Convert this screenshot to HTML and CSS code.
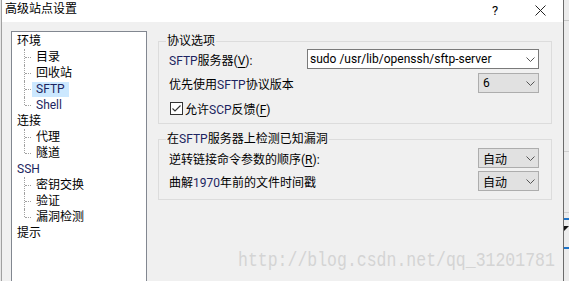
FILE: index.html
```html
<!DOCTYPE html>
<html lang="zh-CN">
<head>
    <meta charset="UTF-8">
    <title>高级站点设置</title>
    <link rel="stylesheet" href="styles.css">
</head>
<body>
    <div class="screen">
        <div class="dialog">
            <div class="titlebar">
                <span class="title">高级站点设置</span>
                <span class="help">?</span>
                <svg class="close" width="11" height="11" viewBox="0 0 11 11">
                    <path d="M0.5 0.5 L10.5 10.5 M10.5 0.5 L0.5 10.5" stroke="#222" stroke-width="1"/>
                </svg>
            </div>

            <div class="content">
                <div class="tree">
                    <div class="node">环境</div>
                    <div class="kids">
                        <div class="leaf"><span>目录</span></div>
                        <div class="leaf"><span>回收站</span></div>
                        <div class="leaf"><span class="lat selected">SFTP</span></div>
                        <div class="leaf"><span class="lat">Shell</span></div>
                    </div>
                    <div class="node">连接</div>
                    <div class="kids">
                        <div class="leaf"><span>代理</span></div>
                        <div class="leaf"><span>隧道</span></div>
                    </div>
                    <div class="node lat">SSH</div>
                    <div class="kids">
                        <div class="leaf"><span>密钥交换</span></div>
                        <div class="leaf"><span>验证</span></div>
                        <div class="leaf"><span>漏洞检测</span></div>
                    </div>
                    <div class="node">提示</div>
                </div>

                <div class="panel">
                    <fieldset class="group first">
                        <legend>协议选项</legend>
                        <div class="row">
                            <span class="label"><span class="lat">SFTP</span>服务器(<u>V</u>):</span>
                            <div class="combo edit wide">
                                <span class="value">sudo /usr/lib/openssh/sftp-server</span>
                                <svg class="chev" width="9" height="5" viewBox="0 0 9 5"><polyline points="0.5,0.5 4.5,4.5 8.5,0.5" fill="none" stroke="#555"/></svg>
                            </div>
                        </div>
                        <div class="row">
                            <span class="label">优先使用<span class="lat">SFTP</span>协议版本</span>
                            <div class="combo small">
                                <span class="value">6</span>
                                <svg class="chev" width="9" height="5" viewBox="0 0 9 5"><polyline points="0.5,0.5 4.5,4.5 8.5,0.5" fill="none" stroke="#555"/></svg>
                            </div>
                        </div>
                        <div class="check-row">
                            <svg width="13" height="13" viewBox="0 0 13 13">
                                <rect x="0.5" y="0.5" width="12" height="12" fill="#fff" stroke="#333"/>
                                <path d="M2.5 6.5 L5 9 L10.5 3.5" fill="none" stroke="#333" stroke-width="1.1"/>
                            </svg>
                            <span class="label">允许<span class="lat">SCP</span>反馈(<u>F</u>)</span>
                        </div>
                    </fieldset>

                    <fieldset class="group second">
                        <legend>在<span class="lat">SFTP</span>服务器上检测已知漏洞</legend>
                        <div class="row">
                            <span class="label">逆转链接命令参数的顺序(<u>R</u>):</span>
                            <div class="combo small">
                                <span class="value">自动</span>
                                <svg class="chev" width="9" height="5" viewBox="0 0 9 5"><polyline points="0.5,0.5 4.5,4.5 8.5,0.5" fill="none" stroke="#555"/></svg>
                            </div>
                        </div>
                        <div class="row">
                            <span class="label">曲解<span class="lat">1970</span>年前的文件时间戳</span>
                            <div class="combo small">
                                <span class="value">自动</span>
                                <svg class="chev" width="9" height="5" viewBox="0 0 9 5"><polyline points="0.5,0.5 4.5,4.5 8.5,0.5" fill="none" stroke="#555"/></svg>
                            </div>
                        </div>
                    </fieldset>
                </div>
            </div>
        </div>

        <div class="strip">
            <div class="strip-x"></div>
            <div class="strip-line"></div>
            <div class="strip-blue"></div>
            <div class="strip-arrow"></div>
            <div class="strip-blue"></div>
        </div>

        <div class="watermark">http://blog.csdn.net/qq_31201781</div>
    </div>
</body>
</html>
```

FILE: styles.css
```css
body {
    margin: 0;
    background-color: #e6e6e6;
    font-family: Roboto, "Noto Sans CJK SC", sans-serif;
    font-size: 12px;
    color: #000;
}

.screen {
    position: relative;
    display: flex;
    width: 569px;
    height: 281px;
    overflow: hidden;
    padding-left: 1px;
    box-sizing: border-box;
}

.dialog {
    width: 562px;
    height: 281px;
    flex: none;
    box-sizing: border-box;
    border-left: 1px solid #a0a0a0;
    background-color: #f0f0f0;
}

.titlebar {
    height: 22px;
    display: flex;
    align-items: center;
    padding-left: 3px;
    background-color: #fff;
}

.title {
    flex: 1;
    line-height: 16px;
    margin-top: -4px;
}

.help {
    font-size: 13px;
    width: 10px;
    margin-right: 33px;
    margin-top: -2px;
}

.close {
    margin-right: 17px;
    margin-top: -2px;
}

.content {
    display: flex;
    padding: 9px 0 0 9px;
}

.tree {
    width: 136px;
    height: 260px;
    box-sizing: border-box;
    border: 1px solid #828790;
    background-color: #fff;
    padding-top: 1px;
}

.node {
    height: 16px;
    line-height: 16px;
    padding-left: 5px;
}

.leaf {
    position: relative;
    height: 16px;
    line-height: 16px;
    padding-left: 20px;
}

.leaf::before {
    content: "";
    position: absolute;
    left: 12px;
    top: 0;
    height: 100%;
    border-left: 1px dotted #a0a0a0;
}

.leaf:last-child::before {
    height: 8px;
}

.leaf::after {
    content: "";
    position: absolute;
    left: 13px;
    top: 8px;
    width: 6px;
    border-top: 1px dotted #a0a0a0;
}

.leaf span {
    display: inline-block;
    padding: 0 4px;
    height: 15px;
    line-height: 15px;
    margin-top: 1px;
    vertical-align: top;
}

.leaf span.selected {
    background-color: #cce8ff;
}

.lat {
    color: #1c2560;
}

.panel {
    width: 394px;
    margin-left: 11px;
    margin-top: 2px;
}

.group {
    margin: 0;
    min-width: 0;
    border: 1px solid #dcdcdc;
    padding: 0 12px 7px 7px;
}

.group legend {
    padding: 0 1px;
    line-height: 16px;
    height: 16px;
}

.group.second {
    margin-top: 7px;
    padding-bottom: 8px;
}

.row {
    display: flex;
    align-items: center;
    justify-content: space-between;
    height: 20px;
    padding-left: 3px;
}

.first .row {
    margin-bottom: 4px;
}

.second .row:first-of-type {
    margin-top: 1px;
    margin-bottom: 3px;
}

.label u {
    text-decoration-thickness: 1px;
    text-underline-offset: 2px;
}

.combo {
    display: flex;
    align-items: center;
    height: 20px;
    box-sizing: border-box;
    border: 1px solid #adadad;
    background-color: #e1e1e1;
}

.combo.edit {
    border-color: #7a7a7a;
    background-color: #fff;
}

.combo.wide {
    width: 232px;
}

.combo.small {
    width: 61px;
}

.combo .value {
    flex: 1;
    padding-left: 4px;
    white-space: nowrap;
}

.combo.edit .value {
    padding-left: 2px;
}

.chev {
    margin-right: 3px;
    margin-top: 1px;
}

.check-row {
    display: flex;
    align-items: center;
    height: 16px;
    margin-top: 7px;
    padding-left: 4px;
    gap: 2px;
}

.strip {
    width: 6px;
    flex: none;
    border-left: 1px solid #6b6b6b;
    background-color: #ececec;
}

.strip-x {
    height: 10px;
    margin-top: 20px;
    border-top: 1px solid #c8c8c8;
}

.strip-line {
    height: 60px;
    margin-top: 120px;
    border-top: 1px solid #cfcfcf;
    border-bottom: 1px solid #cfcfcf;
}

.strip-blue {
    height: 2px;
    margin-top: 5px;
    background-color: #1e73c8;
}

.strip-arrow {
    width: 0;
    height: 0;
    margin-top: 6px;
    border-top: 5px solid #111;
    border-right: 5px solid transparent;
    margin-bottom: 16px;
}

.watermark {
    position: absolute;
    left: 238px;
    top: 252px;
    font-family: "Liberation Mono", monospace;
    font-size: 16.5px;
    line-height: 18px;
    color: #d4d4d4;
    transform: scaleY(1.2);
    transform-origin: left center;
    white-space: nowrap;
}
```
